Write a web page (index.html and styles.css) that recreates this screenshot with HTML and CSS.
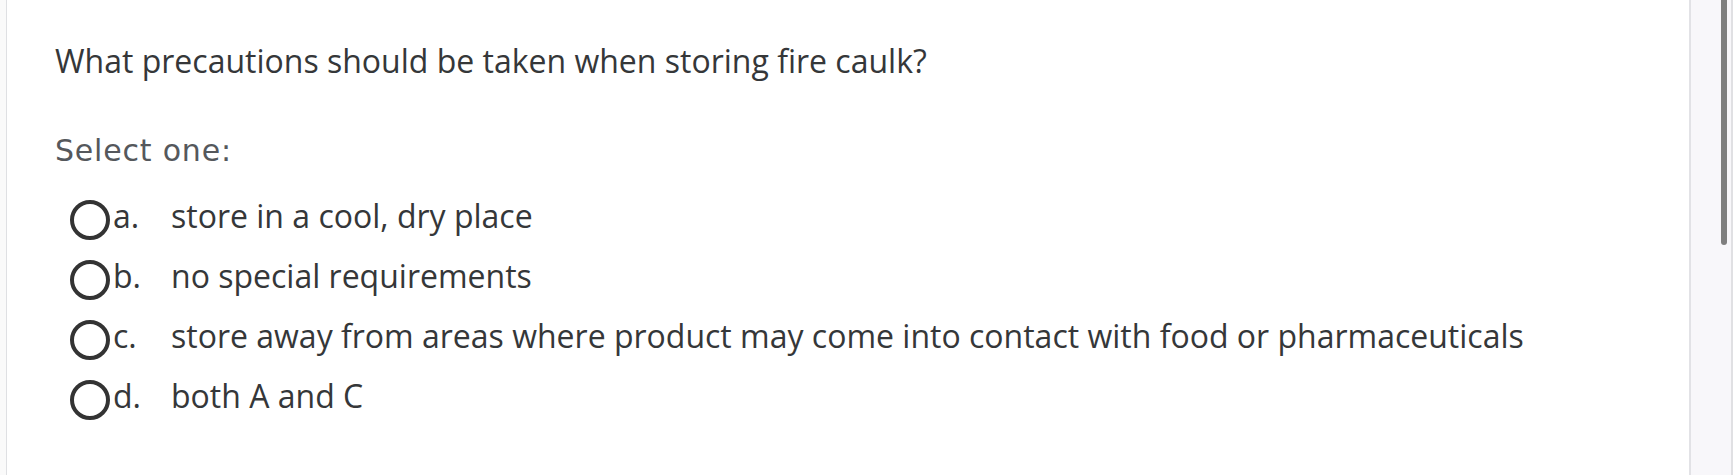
FILE: index.html
```html
<!DOCTYPE html>
<html lang="en">
<head>
<meta charset="utf-8">
<title>Question</title>
<link rel="stylesheet" href="styles.css">
</head>
<body>
<div class="page">
  <main class="content">
    <div class="qtext">What precautions should be taken when storing fire caulk?</div>
    <div class="prompt">Select one:</div>
    <div class="answer">
      <div class="opt"><span class="radio"></span><span class="num">a.</span><span class="txt">store in a cool, dry place</span></div>
      <div class="opt"><span class="radio"></span><span class="num">b.</span><span class="txt">no special requirements</span></div>
      <div class="opt"><span class="radio"></span><span class="num">c.</span><span class="txt">store away from areas where product may come into contact with food or pharmaceuticals</span></div>
      <div class="opt"><span class="radio"></span><span class="num">d.</span><span class="txt">both A and C</span></div>
    </div>
  </main>
  <div class="scrollbar"><div class="thumb"></div></div>
</div>
</body>
</html>
```

FILE: styles.css
```css
html, body {
  margin: 0;
  padding: 0;
  height: 100%;
  background: #ffffff;
}
.page {
  display: flex;
  height: 475px;
  overflow: hidden;
  background: #fafafa;
}
.content {
  flex: 0 0 auto;
  width: 1685px;
  margin-left: 6px;
  border-left: 1px solid #dfe0e3;
  border-right: 2px solid #e2e2e6;
  background: #fff;
  padding: 38px 0 0 48px;
  box-sizing: border-box;
  font-family: "Open Sans", sans-serif;
  color: #353739;
}
.qtext {
  font-size: 32px;
  line-height: 45px;
}
.prompt {
  margin-top: 45px;
  font-family: "DejaVu Sans", Inter, sans-serif;
  font-size: 30px;
  letter-spacing: 0.8px;
  line-height: 45px;
  color: #55585c;
}
.answer {
  margin-top: 12px;
  padding-left: 15px;
}
.opt {
  display: flex;
  align-items: center;
  height: 60px;
  font-size: 32px;
}
.radio {
  flex: 0 0 auto;
  width: 32px;
  height: 32px;
  border: 4px solid #333;
  border-radius: 50%;
  margin-top: 10px;
}
.num {
  width: 58px;
  margin-left: 3px;
}
.scrollbar {
  flex: 1 1 auto;
  background: #f8f7fa;
  border-right: 2px solid #e0e0e3;
  position: relative;
}
.thumb {
  position: absolute;
  left: 30px;
  top: 0;
  width: 6px;
  height: 245px;
  background: #7f7f7f;
  border-radius: 0 0 3px 3px;
}
```
